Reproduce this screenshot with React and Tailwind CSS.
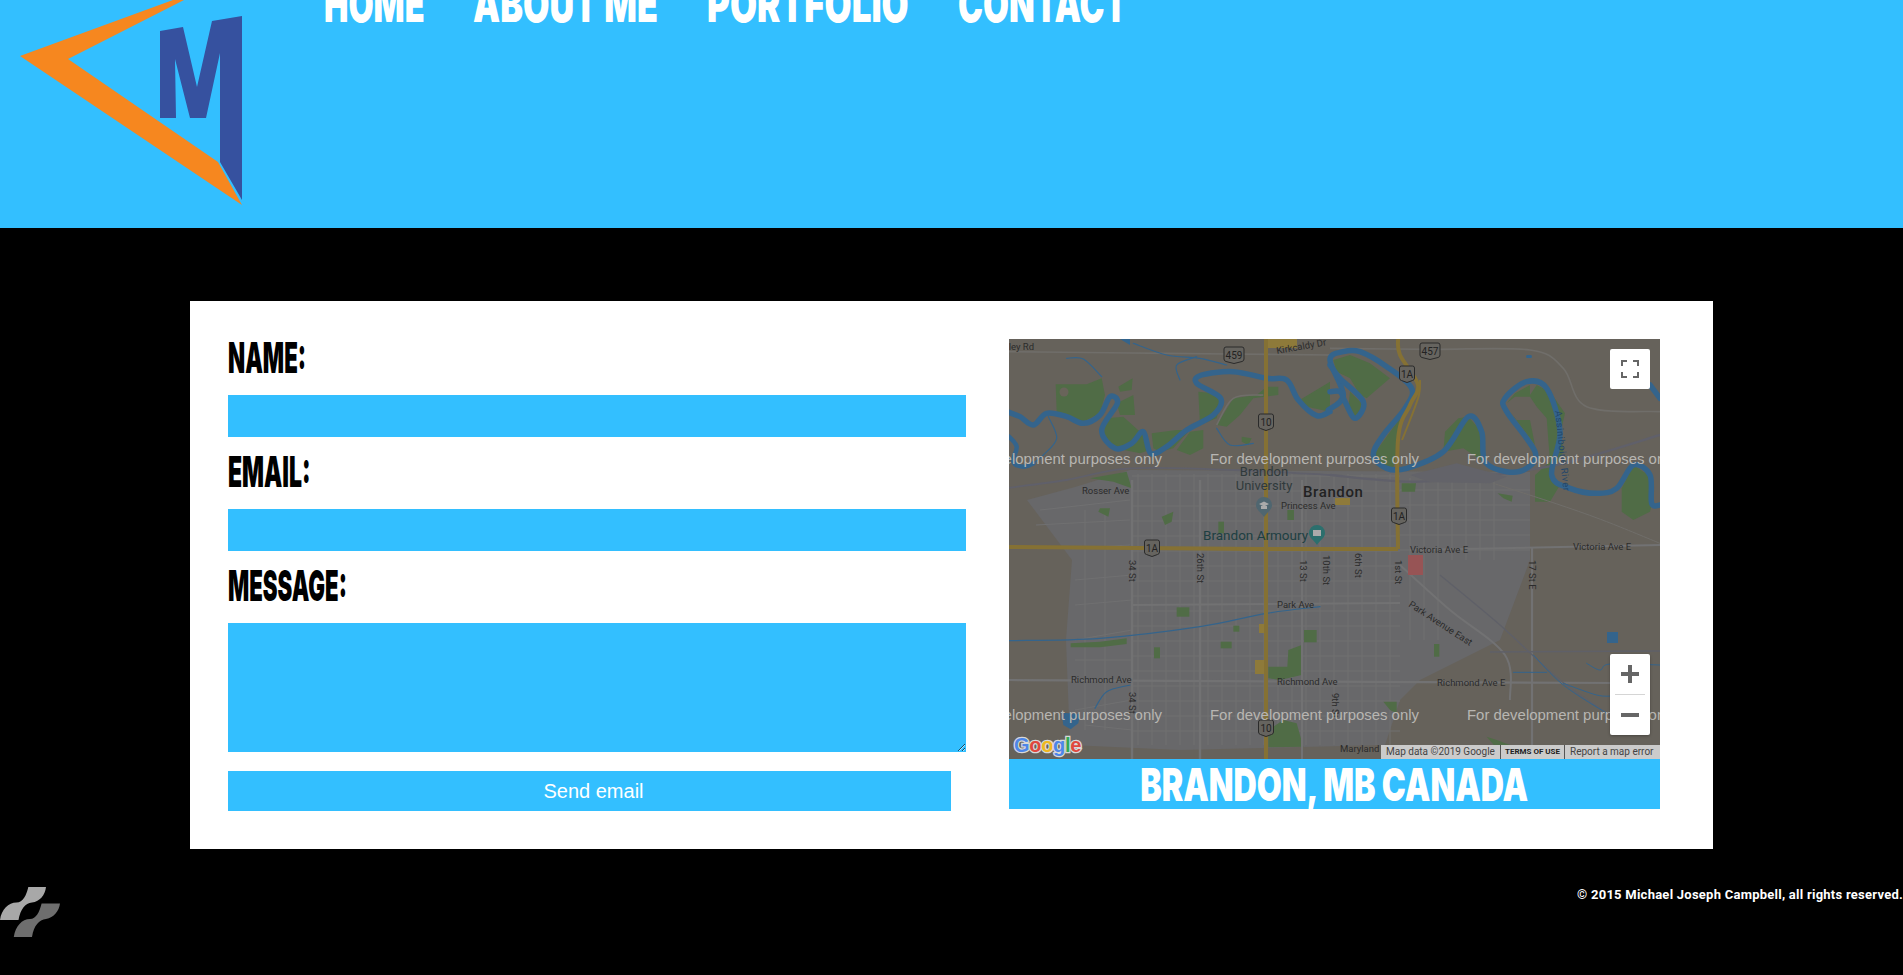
import React from "react";

const Z = { a: [1000, 335], b: [1330, 335], c: [1000, 560], d: [1330, 560] };
const pg = (k, pts) => pts.map(([x, y]) => [Z[k][0] + x / 3, Z[k][1] + y / 3]);
const smooth = (p) => {
  let d = `M${p[0][0]} ${p[0][1]}`;
  for (let i = 0; i < p.length - 1; i++) {
    const a = p[Math.max(i - 1, 0)], b = p[i], c = p[i + 1], e = p[Math.min(i + 2, p.length - 1)];
    d += `C${b[0] + (c[0] - a[0]) / 6} ${b[1] + (c[1] - a[1]) / 6} ${c[0] - (e[0] - b[0]) / 6} ${c[1] - (e[1] - b[1]) / 6} ${c[0]} ${c[1]}`;
  }
  return d;
};
const poly = (k, pts) => pg(k, pts).map((q) => q.join(",")).join(" ");

const GREEN = "#506c46", WATER = "#34648c", STREET = "#707071", YEL = "#857134", ROAD = "#706e6a", MAJOR = "#727273";

const parks = [
  ["a", [[167,148],[260,148],[305,130],[315,180],[300,235],[250,260],[170,230]]],
  ["a", [[355,155],[398,130],[395,165],[360,170]]],
  ["a", [[350,205],[400,180],[405,240],[360,240]]],
  ["a", [[320,250],[370,245],[420,290],[435,285],[450,345],[420,355],[345,340],[310,300]]],
  ["a", [[455,295],[530,285],[570,285],[520,340],[480,350],[460,340]]],
  ["a", [[530,345],[570,290],[610,285],[610,340],[570,360]]],
  ["a", [[595,170],[640,175],[665,195],[650,250],[600,270]]],
  ["a", [[650,270],[700,190],[770,180],[800,155],[835,155],[835,180],[760,190],[720,240],[680,275]]],
  ["a", [[990,140],[990,230],[920,215],[890,200]]],
  ["a", [[725,305],[755,310],[745,330],[725,320]]],
  ["a", [[270,430],[380,410],[395,460],[340,440]]],
  ["a", [[300,520],[330,520],[325,545],[295,530]]],
  ["a", [[485,545],[520,530],[515,560],[495,570]]],
  ["a", [[655,560],[672,560],[672,595],[655,595]]],
  ["a", [[862,525],[882,525],[882,555],[862,555]]],
  ["b", [[10,75],[60,60],[120,85],[180,130],[110,190],[90,180],[60,130],[20,110]]],
  ["b", [[60,170],[100,210],[75,250],[55,220]]],
  ["b", [[130,360],[210,250],[205,330],[190,400],[150,390]]],
  ["b", [[345,290],[385,250],[415,245],[455,290],[460,380],[400,340],[340,350]]],
  ["b", [[530,205],[555,175],[600,150],[600,180],[620,150],[660,170],[705,235],[690,300],[650,250],[620,215],[600,185],[555,185]]],
  ["b", [[560,255],[600,255],[615,330],[540,230]]],
  ["b", [[650,250],[690,270],[700,350],[660,420],[690,450],[660,500],[615,500],[615,420],[660,380]]],
  ["b", [[875,460],[910,390],[955,420],[965,510],[960,530],[910,555],[875,530]]],
  ["b", [[215,445],[258,445],[255,470],[215,470]]],
  ["b", [[503,475],[548,482],[545,500],[520,490]]],
  ["c", [[530,142],[568,142],[568,170],[530,170]]],
  ["c", [[462,262],[480,262],[480,295],[462,295]]],
  ["c", [[662,245],[695,245],[695,265],[662,265]]],
  ["c", [[700,197],[718,197],[718,215],[700,215]]],
  ["c", [[912,210],[950,210],[950,247],[912,247]]],
  ["c", [[805,320],[862,320],[865,270],[905,255],[905,345],[840,360],[805,355]]],
  ["c", [[805,510],[850,480],[890,490],[910,560],[805,562]]],
  ["c", [[212,250],[300,245],[380,235],[380,252],[300,262],[212,262]]],
  ["d", [[160,425],[200,425],[200,460],[180,450]]],
  ["d", [[470,530],[500,540],[540,555],[500,565]]],
  ["d", [[312,252],[328,252],[328,290],[312,290]]],
];

const labels = [
  [1034, 350, "Valley Rd", "end"], [1082, 494, "Rosser Ave"], [1281, 509, "Princess Ave"],
  [1410, 553, "Victoria Ave E"], [1573, 550, "Victoria Ave E"], [1277, 608, "Park Ave"],
  [1071, 683, "Richmond Ave"], [1277, 685, "Richmond Ave"], [1437, 686, "Richmond Ave E"],
  [1340, 752, "Maryland Ave"],
];
const vertical = [
  [1129, 560, "34 St"], [1129, 692, "34 St"], [1197, 553, "26th St"], [1300, 560, "13 St"],
  [1323, 555, "10th St"], [1355, 553, "6th St"], [1395, 560, "1st St"], [1529, 560, "17 St E"], [1332, 693, "9th St"],
];
const shields = [
  [1234, 355, "459", 20], [1266, 422, "10", 15], [1152, 548, "1A", 15], [1430, 351, "457", 20],
  [1407, 374, "1A", 15], [1399, 516, "1A", 15], [1266, 728, "10", 15],
];

function MapDrawing() {
  const vx = Array.from({ length: 19 }, (_, i) => 1138 + i * 14);
  const hy = Array.from({ length: 18 }, (_, i) => 476 + i * 15);
  return (
    <svg viewBox="1009 339 651 420" className="block w-full h-full font-['Roboto',sans-serif]">
      <rect x="1009" y="339" width="651" height="420" fill="#66625b" />
      <polygon fill="#68686a" points="1027,500 1075,487 1130,470 1530,472 1530,560 1500,640 1420,680 1400,700 1385,745 1180,750 1070,745 1066,640 1072,560" />
      {vx.map((x) => <line key={x} x1={x} x2={x} y1="474" y2="745" stroke={STREET} strokeWidth="1" />)}
      {hy.map((y) => <line key={y} x1="1132" x2="1400" y1={y} y2={y} stroke={STREET} strokeWidth="1" />)}
      {[1410, 1424, 1438, 1452, 1466, 1480, 1494].map((x) => <line key={x} x1={x} x2={x} y1="478" y2={x < 1440 ? 640 : 560} stroke={STREET} strokeWidth="1" />)}
      {[490, 505, 520, 535, 550].map((y) => <line key={y} x1="1400" x2="1530" y1={y} y2={y} stroke={STREET} strokeWidth="1" />)}
      {[[1040,510,1130,500],[1036,525,1130,520],[1075,548,1130,545],[1075,580,1132,575],[1075,605,1132,600],[1075,640,1132,630],[1075,660,1132,660],[1075,710,1132,700],[1085,725,1132,730]].map((l, i) => (
        <line key={i} x1={l[0]} y1={l[1]} x2={l[2]} y2={l[3]} stroke={STREET} strokeWidth="1.2" />
      ))}
      {[1085, 1105].map((x) => <line key={x} x1={x} x2={x} y1="510" y2="730" stroke={STREET} strokeWidth="1" />)}

      {parks.map(([k, p], i) => <polygon key={i} points={poly(k, p)} fill={GREEN} />)}
      <circle cx="1064" cy="392" r="4.5" fill="#69645a" />

      <g fill="none" stroke={ROAD} strokeWidth="1.6">
        <path d={smooth(pg("a", [[27,50],[500,55],[990,60]]))} />
        <path d={smooth(pg("b", [[0,40],[300,43],[600,45],[700,100],[770,215],[990,230]]))} />
        <path d={smooth(pg("a", [[650,270],[700,190],[790,180]]))} />
        <path d={smooth(pg("b", [[490,445],[690,510],[830,560],[990,625]]))} strokeWidth="1" />
        <line x1="1132" y1="480" x2="1132" y2="759" strokeWidth="2.4" stroke={MAJOR} />
        <line x1="1200" y1="480" x2="1200" y2="759" strokeWidth="2.4" stroke={MAJOR} />
        <line x1="1302" y1="480" x2="1302" y2="759" strokeWidth="2" stroke={MAJOR} />
        <line x1="1532" y1="548" x2="1532" y2="759" strokeWidth="2.2" stroke={MAJOR} />
        <line x1="1009" y1="680" x2="1620" y2="683" strokeWidth="2.2" stroke={MAJOR} />
        <line x1="1132" y1="605" x2="1400" y2="603" strokeWidth="2" stroke={MAJOR} />
        <line x1="1410" y1="550" x2="1660" y2="545" strokeWidth="2" stroke={MAJOR} />
        <path d={smooth([[1400,565],[1450,610],[1505,655],[1510,700]])} strokeWidth="2" stroke={MAJOR} />
        <path d={smooth([[1440,575],[1500,625],[1560,680],[1610,715]])} strokeWidth="1.4" stroke="#5f6068" />
        <path d="M1490 652 L1660 651" strokeWidth="1.4" stroke="#5f6068" />
      </g>
      <path d={smooth(pg("a", [[27,458],[200,435],[390,400],[700,405],[990,420]]))} fill="none" stroke="#60606a" strokeWidth="1.8" />
      <path d={smooth(pg("b", [[0,420],[240,440],[450,425],[700,385],[990,300]]))} fill="none" stroke="#60606a" strokeWidth="2.4" />
      <polygon points={poly("b", [[240,420],[380,385],[530,425],[480,445],[300,442]])} fill="#636369" />

      <g fill="none" stroke={WATER} strokeLinejoin="round" strokeLinecap="round">
        <path strokeWidth="5.500" d={smooth(pg("a", [[27,232],[60,245],[100,270],[140,235],[200,245],[250,265],[300,240],[330,185],[352,205],[305,285],[345,340],[395,325],[430,290],[452,355],[500,335],[560,285],[640,240],[662,190],[590,145],[605,120],[700,110],[800,130],[860,135],[895,195],[950,242],[990,230]]))} />
        <path strokeWidth="5.500" d={smooth(pg("b", [[-5,225],[40,180],[0,75],[40,50],[90,50],[170,95],[245,160],[225,220],[160,300],[130,360],[170,400],[230,400],[340,350],[415,245],[455,290],[465,380],[530,410],[590,400],[615,350],[530,230],[525,190],[590,140],[650,160],[690,290],[665,420],[720,460],[800,475],[860,460],[910,390],[960,420],[965,505],[990,510]]))} />
        <path strokeWidth="5.500" d={smooth(pg("b", [[0,90],[30,130],[100,200],[75,250],[45,200],[30,170],[0,170]]))} />
        <path strokeWidth="5.500" d={smooth(pg("b", [[960,150],[990,190]]))} />
        <path strokeWidth="4.500" d={smooth(pg("a", [[27,305],[50,335],[40,380],[70,395],[100,385]]))} />
        <path strokeWidth="1.2" d={smooth(pg("a", [[145,245],[170,310],[130,360],[100,385]]))} />
        <path strokeWidth="1.2" d={smooth(pg("a", [[200,70],[250,72],[305,125]]))} />
        <path strokeWidth="1.2" d={smooth(pg("a", [[400,25],[500,60],[600,70],[680,90]]))} />
        <path strokeWidth="1.2" d={smooth(pg("a", [[540,135],[530,90],[590,65]]))} />
        <path strokeWidth="1.2" d={smooth(pg("a", [[650,280],[690,330],[760,325]]))} />
        <path strokeWidth="1.2" d={smooth(pg("c", [[27,242],[300,235],[600,200],[800,160],[960,140]]))} />
        <path strokeWidth="1.2" d={smooth(pg("c", [[285,445],[320,395],[390,375]]))} />
        <path strokeWidth="1" d={smooth(pg("d", [[550,337],[650,337]]))} />
        <path strokeWidth="1" d={smooth(pg("d", [[770,310],[810,330],[840,312],[990,315]]))} />
        <path strokeWidth="1" d={smooth(pg("d", [[700,370],[800,405],[850,408]]))} />
        <path strokeWidth="1" d={smooth(pg("d", [[610,285],[700,375],[830,460]]))} />
      </g>
      <polygon points={poly("a", [[360,12],[390,12],[390,30]])} fill={WATER} />
      <polygon points={poly("c", [[185,458],[240,462],[235,490],[212,508],[190,495]])} fill={WATER} />
      <rect x="1607" y="632" width="11" height="11" fill={WATER} />
      <rect x="1526" y="355" width="6" height="3" rx="1.5" fill={WATER} />

      <rect x="1268" y="339" width="29" height="9" fill="#8e7a3a" />
      <rect x="1335" y="498" width="15" height="7" fill="#8e7a3a" />
      <rect x="1255" y="660" width="9" height="14" fill="#8e7a3a" />
      <rect x="1259" y="624" width="6" height="9" fill="#8e7a3a" />
      <polygon points="1408,555 1423,555 1423,575 1408,575" fill="#975455" />

      <g fill="none" stroke={YEL} strokeWidth="4">
        <line x1="1266" y1="339" x2="1266" y2="759" />
        <path d="M1009 547 L1260 549 L1398 549" />
        <path d={smooth([[1398,549],[1398,440],[1410,405],[1418,385],[1400,355],[1398,339]])} />
      </g>
      <path d={smooth([[1402,440],[1410,420],[1419,395],[1420,380]])} fill="none" stroke={YEL} strokeWidth="2" />

      <g fill="#2b2b2b" fontSize="9.5">
        {labels.map(([x, y, t, a]) => <text key={t + x} x={x} y={y} textAnchor={a || "start"}>{t}</text>)}
        {vertical.map(([x, y, t]) => <text key={t + y} x={x} y={y} transform={`rotate(90 ${x} ${y})`}>{t}</text>)}
        <text x="1277" y="354" transform="rotate(-10 1277 354)">Kirkcaldy Dr</text>
        <text x="1408" y="606" transform="rotate(33 1408 606)">Park Avenue East</text>
        <text x="1555" y="411" transform="rotate(84 1555 411)" fill="#23466a" letterSpacing="0.5">Assiniboine River</text>
      </g>
      <g textAnchor="middle" fill="#303a3c" fontSize="13">
        <text x="1264" y="476">Brandon</text>
        <text x="1264" y="490">University</text>
      </g>
      <text x="1303" y="497" fontSize="15" fontWeight="500" letterSpacing="0.6" fill="#222">Brandon</text>
      <text x="1203" y="540" fontSize="13.5" fill="#1d3f42">Brandon Armoury</text>
      <path d="M1264 497a8 8 0 0 1 8 8c0 5-5 7-8 12c-3-5-8-7-8-12a8 8 0 0 1 8-8z" fill="#4f6670" />
      <path d="M1259 504l5-2.500 5 2.500-5 2.500z M1261 506h6v3h-6z" fill="#aaa" />
      <path d="M1317 525a8 8 0 0 1 8 8c0 5-5 7-8 12c-3-5-8-7-8-12a8 8 0 0 1 8-8z" fill="#2c6f6d" />
      <rect x="1313" y="530" width="8" height="6" fill="#aaa" />

      {shields.map(([x, y, t, w]) => (
        <g key={t + x}>
          <path d={`M${x - w / 2 + 2} ${y - 8}h${w - 4}q2 0 2 2v10q0 2-2 2.500l-${w / 2 - 2} 2-${w / 2 - 2}-2q-2-.5-2-2.500v-10q0-2 2-2z`} fill="#66645f" stroke="#2a2a2a" strokeWidth="1" />
          <text x={x} y={y + 3.500} textAnchor="middle" fontSize="10" fill="#222">{t}</text>
        </g>
      ))}

      <g fontSize="15" fill="#b8b6b2" className="font-['Liberation_Sans',sans-serif]">
        {[464, 720].map((y) => [953, 1210, 1467].map((x) => (
          <text key={`${x}-${y}`} x={x} y={y} textLength="209" lengthAdjust="spacingAndGlyphs">For development purposes only</text>
        )))}
      </g>

      <text x="1014" y="752" fontSize="20" fontWeight="700" stroke="#d8d8d8" strokeWidth="2.500" paintOrder="stroke" letterSpacing="-0.3" className="font-['Liberation_Sans',sans-serif]">
        <tspan fill="#4e86e8">G</tspan><tspan fill="#e0483d">o</tspan><tspan fill="#f0b820">o</tspan><tspan fill="#4e86e8">g</tspan><tspan fill="#32a853">l</tspan><tspan fill="#e0483d">e</tspan>
      </text>
    </svg>
  );
}

function Wide({ w, sx, children, cls = "" }) {
  return <span className={cls} style={{ width: w, display: "block" }}>
    <span className="inline-block whitespace-nowrap origin-left" style={{ transform: `scaleX(${sx})` }}>{children}</span>
  </span>;
}

const navItems = [["HOME", 99, 0.65], ["ABOUT ME", 184, 0.683], ["PORTFOLIO", 201, 0.698], ["CONTACT", 166, 0.669]];
const fieldCls = "block w-[738px] bg-[#33bfff] outline-none";
const labelCls = "block font-['Inter',sans-serif] font-black text-[43px] leading-[31px] text-black";

export default function App() {
  return (
    <div className="min-h-[975px] bg-black flex flex-col overflow-hidden">
      <header className="h-[228px] bg-[#33bfff] flex items-start shrink-0">
        <svg viewBox="0 0 250 210" className="w-[250px] h-[210px] shrink-0">
          <polygon fill="#36519f" points="160,31 183,27 197,87 212,21 242,16 242,200 220,162 220,53 206,118 190,118 175,59 176,118 160,118" />
          <polygon fill="#f6871f" points="173,0 20,56 242,205 218,162 68,59 184,0" />
        </svg>
        <nav className="ml-[74px] flex gap-[50px] -mt-[14px] font-['Inter',sans-serif] font-black text-[50px] leading-[36px] text-white">
          {navItems.map(([t, w, s]) => <Wide key={t} w={w} sx={s}>{t}</Wide>)}
        </nav>
      </header>

      <main className="mt-[73px] ml-[190px] w-[1523px] h-[548px] bg-white flex items-start shrink-0">
        <form className="ml-[38px] w-[738px] pt-[41px]">
          <label className="block h-[53px]"><Wide w={76} sx={0.518} cls={labelCls}>NAME:</Wide></label>
          <input className={`${fieldCls} h-[42px]`} />
          <label className="block h-[72px] pt-[19px]"><Wide w={80} sx={0.534} cls={labelCls}>EMAIL:</Wide></label>
          <input className={`${fieldCls} h-[42px]`} />
          <label className="block h-[72px] pt-[19px]"><Wide w={118} sx={0.516} cls={labelCls}>MESSAGE:</Wide></label>
          <textarea className={`${fieldCls} h-[129px]`} />
          <button type="button" className="block mt-[19px] w-[723px] h-[40px] pl-[8px] bg-[#33bfff] text-white text-[20px] font-['Liberation_Sans',sans-serif]">Send email</button>
        </form>
        <section className="ml-[43px] mt-[38px] w-[651px]">
          <div className="relative h-[420px] overflow-hidden">
            <MapDrawing />
            <div className="absolute left-[601px] top-[10px] w-[40px] h-[40px] bg-white rounded-[2px] flex items-center justify-center">
              <svg viewBox="0 0 18 18" className="w-[18px] h-[18px]" fill="#666"><path d="M0 0h6v2H2v4H0zM12 0h6v6h-2V2h-4zM0 12h2v4h4v2H0zM16 12h2v6h-6v-2h4z" /></svg>
            </div>
            <div className="absolute left-[601px] top-[315px] w-[40px] h-[81px] bg-white rounded-[2px] flex flex-col items-center shadow-[0_1px_3px_rgba(0,0,0,0.3)]">
              <div className="h-[40px] flex items-center justify-center">
                <svg viewBox="0 0 18 18" className="w-[18px] h-[18px]" fill="#666"><path d="M7 0h4v7h7v4h-7v7H7v-7H0V7h7z" /></svg>
              </div>
              <div className="w-[30px] h-px bg-[#d5d5d5]" />
              <div className="h-[40px] flex items-center justify-center">
                <svg viewBox="0 0 18 18" className="w-[18px] h-[18px]" fill="#666"><path d="M0 7h18v4H0z" /></svg>
              </div>
            </div>
            <div className="absolute right-0 bottom-0 w-[279px] h-[14px] flex gap-[1px] bg-[#555] text-[10px] leading-[14px] text-[#444] font-['Roboto',sans-serif]">
              <span className="w-[119px] bg-[#cbcbcb] pl-[5px] whitespace-nowrap">Map data ©2019 Google</span>
              <span className="w-[63px] bg-[#cbcbcb] text-center font-bold text-[8px] text-[#222] whitespace-nowrap">TERMS OF USE</span>
              <span className="flex-1 bg-[#cbcbcb] pl-[5px] whitespace-nowrap">Report a map error</span>
            </div>
          </div>
          <div className="h-[50px] bg-[#33bfff] flex items-center justify-center overflow-hidden">
            <span className="inline-block whitespace-nowrap scale-x-[0.7] font-['Inter',sans-serif] font-black text-[46px] leading-[33px] text-white">BRANDON, MB CANADA</span>
          </div>
        </section>
      </main>

      <footer className="pt-[38px] flex justify-between items-start">
        <svg viewBox="0 0 60 50" className="w-[60px] h-[50px]">
          <path fill="#a8a8a8" d="M28.300 0H46C45 8 40 14.500 32 15.500C25 16.500 20.500 22 18.500 33H0C1.500 22 8.500 15.500 16.500 15.500C23 15.500 26.500 8 28.300 0Z" />
          <path fill="#6e6e6e" d="M41.600 16.500H60C59 24 54 30.500 46 32C39 33 34 38 32 50H13.800C15.500 39 22 32 30 32C36 32 39.500 25 41.600 16.500Z" />
        </svg>
        <p className="font-['Roboto',sans-serif] font-bold text-[13px] leading-[16px] tracking-[0.25px] text-white whitespace-nowrap">© 2015 Michael Joseph Campbell, all rights reserved.</p>
      </footer>
    </div>
  );
}
